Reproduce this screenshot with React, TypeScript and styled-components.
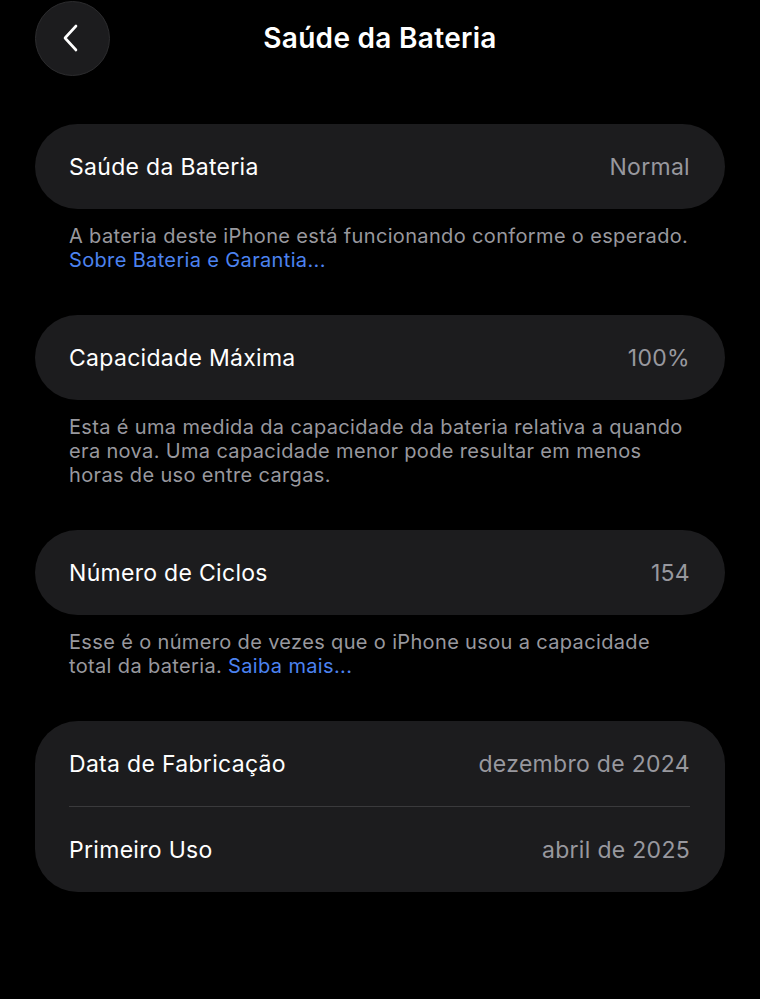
import React from 'react'
import styled, { createGlobalStyle } from 'styled-components'

const GlobalStyle = createGlobalStyle`
  html, body {
    margin: 0;
    padding: 0;
    background: #000;
  }
  body {
    font-family: Inter, 'Noto Sans', sans-serif;
    -webkit-font-smoothing: antialiased;
  }
`

const Page = styled.div`
  width: 760px;
  min-height: 999px;
  background: #000;
  color: #fff;
`

const Header = styled.header`
  display: grid;
  grid-template-columns: 1fr auto 1fr;
  align-items: center;
  height: 76px;
  padding: 0 35px;
`

const BackButton = styled.button`
  width: 75px;
  height: 75px;
  border-radius: 50%;
  background: #1c1c1e;
  border: 1px solid #2c2c2e;
  display: flex;
  align-items: center;
  justify-content: center;
  padding: 0 4px 0 0;
  cursor: pointer;
`

const Title = styled.h1`
  margin: 0;
  font-size: 28px;
  font-weight: 600;
  letter-spacing: 0.3px;
  color: #fff;
`

const Content = styled.main`
  display: flex;
  flex-direction: column;
  gap: 43px;
  padding: 48px 35px 0;
`

const Section = styled.section`
  display: flex;
  flex-direction: column;
  gap: 15px;
`

const Card = styled.div`
  background: #1c1c1e;
  border-radius: 43px;
  padding: 0 35px 0 34px;
`

const Row = styled.div`
  display: flex;
  align-items: center;
  justify-content: space-between;
  height: 85px;
`

const Divider = styled.div`
  height: 1px;
  background: #3a3a3c;
`

const Label = styled.span`
  font-size: 23px;
  color: #fff;
  letter-spacing: 0.3px;
`

const Value = styled.span`
  font-size: 23px;
  color: #98989e;
  letter-spacing: 0.3px;
`

const Footnote = styled.p`
  margin: 0;
  padding: 0 30px 0 34px;
  font-size: 20px;
  line-height: 24px;
  color: #98989e;
  letter-spacing: 0.35px;
`

const Link = styled.a`
  color: #4c83f0;
  text-decoration: none;
`

const ChevronLeft = () => (
  <svg width="18" height="28" viewBox="0 0 18 28" fill="none">
    <path d="M14 2 L3 14 L14 26" stroke="#fff" strokeWidth="2.6" strokeLinecap="round" strokeLinejoin="round" />
  </svg>
)

type Item = { label: string; value: string }

const InfoCard = ({ items }: { items: Item[] }) => (
  <Card>
    {items.map((it, i) => (
      <React.Fragment key={it.label}>
        {i > 0 && <Divider />}
        <Row>
          <Label>{it.label}</Label>
          <Value>{it.value}</Value>
        </Row>
      </React.Fragment>
    ))}
  </Card>
)

export default function App() {
  return (
    <Page>
      <GlobalStyle />
      <Header>
        <BackButton aria-label="Voltar">
          <ChevronLeft />
        </BackButton>
        <Title>Saúde da Bateria</Title>
        <span />
      </Header>
      <Content>
        <Section>
          <InfoCard items={[{ label: 'Saúde da Bateria', value: 'Normal' }]} />
          <Footnote>
            A bateria deste iPhone está funcionando conforme o esperado.
            <br />
            <Link href="#">Sobre Bateria e Garantia...</Link>
          </Footnote>
        </Section>
        <Section>
          <InfoCard items={[{ label: 'Capacidade Máxima', value: '100%' }]} />
          <Footnote>
            Esta é uma medida da capacidade da bateria relativa a quando era nova. Uma capacidade menor pode resultar em menos horas de uso entre cargas.
          </Footnote>
        </Section>
        <Section>
          <InfoCard items={[{ label: 'Número de Ciclos', value: '154' }]} />
          <Footnote>
            Esse é o número de vezes que o iPhone usou a capacidade total da bateria.{' '}
            <Link href="#">Saiba mais...</Link>
          </Footnote>
        </Section>
        <Section>
          <InfoCard
            items={[
              { label: 'Data de Fabricação', value: 'dezembro de 2024' },
              { label: 'Primeiro Uso', value: 'abril de 2025' },
            ]}
          />
        </Section>
      </Content>
    </Page>
  )
}
